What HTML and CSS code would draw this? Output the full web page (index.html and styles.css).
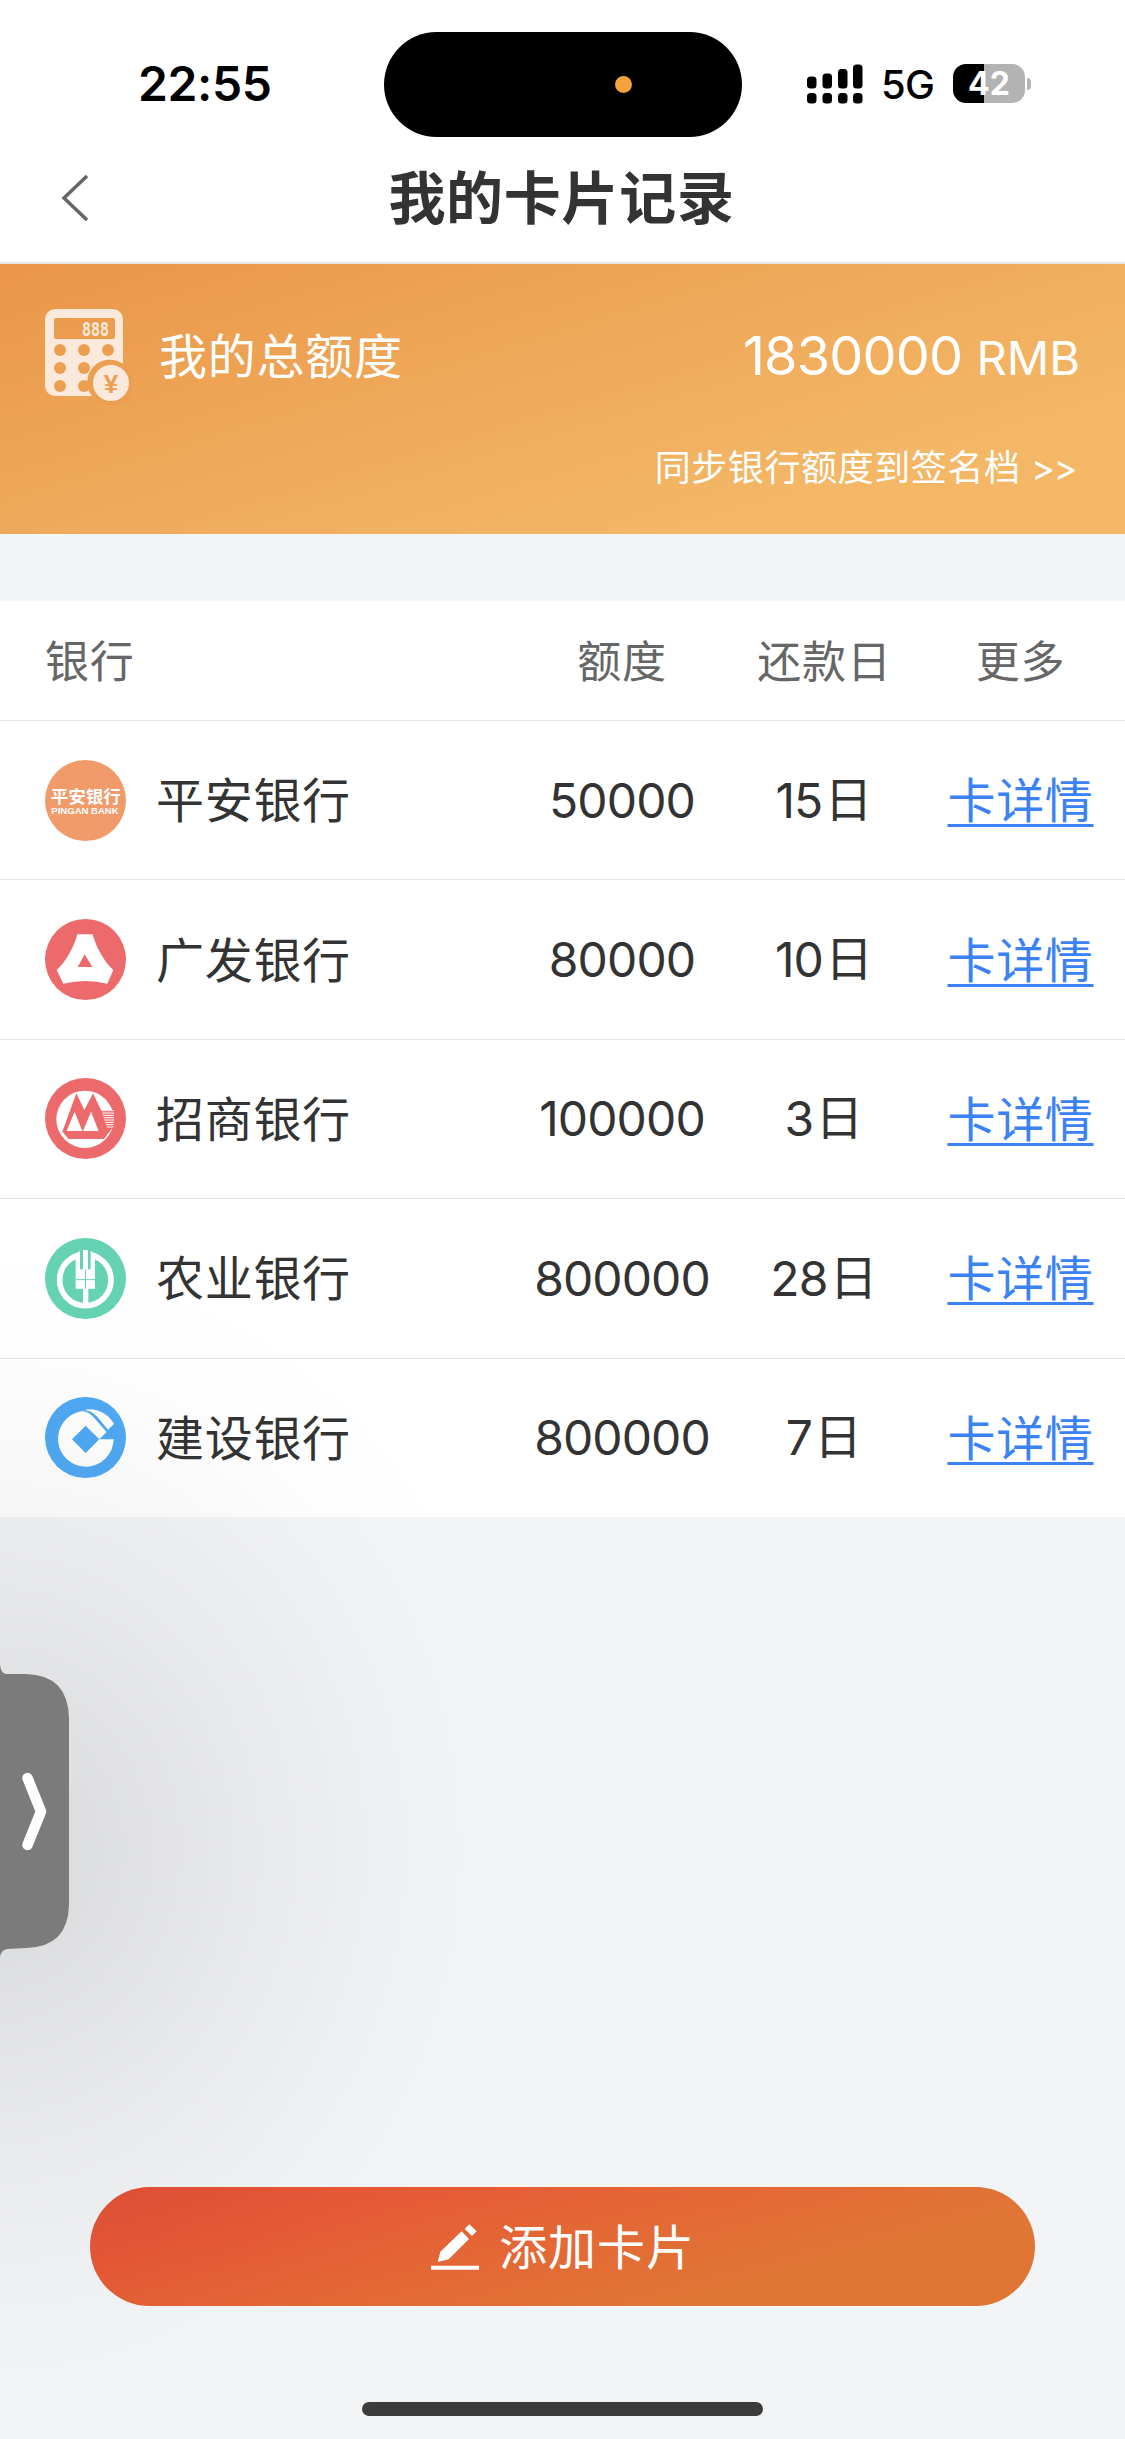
FILE: index.html
```html
<!DOCTYPE html>
<html lang="zh-CN">
<head>
<meta charset="utf-8">
<title>我的卡片记录</title>
<link rel="stylesheet" href="styles.css">
</head>
<body>
<div class="screen">
  <header class="top">
    <div class="status">
      <span class="time">22:55</span>
      <div class="island"><i class="dot"></i></div>
      <div class="signals">
        <svg class="bars" width="56" height="40" viewBox="0 0 56 40">
          <rect x="0" y="12.500" width="9.500" height="12" rx="3.500"/><rect x="15.500" y="9.500" width="9.500" height="15" rx="3.500"/><rect x="31" y="5" width="9.500" height="19.500" rx="3.500"/><rect x="46" y="0.500" width="9.500" height="24" rx="3.500"/>
          <rect x="0" y="29" width="9.500" height="10.500" rx="3.500"/><rect x="15.500" y="29" width="9.500" height="10.500" rx="3.500"/><rect x="31" y="29" width="9.500" height="10.500" rx="3.500"/><rect x="46" y="29" width="9.500" height="10.500" rx="3.500"/>
        </svg>
        <span class="net">5G</span>
        <span class="battery">42</span><i class="cap"></i>
      </div>
    </div>
    <div class="nav">
      <svg class="back" width="30" height="50" viewBox="0 0 30 50"><path d="M27 3L4 25 27 47"/></svg>
      <h1>我的卡片记录</h1>
    </div>
  </header>

  <section class="total">
    <div class="total-row">
      <svg class="calc" width="86" height="92" viewBox="0 0 86 92">
        <path fill-rule="evenodd" d="M13 -2H67Q79 -2 79 10V53A22.500 22.500 0 0 0 48 85H13Q1 85 1 73V10Q1 -2 13 -2ZM12 7Q10 7 10 9V26Q10 28 12 28H69Q71 28 71 26V9Q71 7 69 7Z"/>
        <g class="keys"><circle cx="16" cy="39" r="6"/><circle cx="40" cy="39" r="6"/><circle cx="64" cy="39" r="6"/><circle cx="16" cy="57" r="6"/><circle cx="40" cy="57" r="6"/><circle cx="16" cy="75" r="6"/><circle cx="40" cy="75" r="6"/></g>
        <circle class="ring" cx="67" cy="72" r="20"/><circle cx="67" cy="72" r="18"/>
        <text class="lcd" x="38" y="24.500" textLength="27" lengthAdjust="spacingAndGlyphs">888</text>
        <text class="yen" x="67" y="81.500" text-anchor="middle">¥</text>
      </svg>
      <span class="total-label">我的总额度</span>
      <span class="total-sum"><b>1830000</b> RMB</span>
    </div>
    <div class="sync">同步银行额度到签名档 <span class="more">&gt;&gt;</span></div>
  </section>

  <main class="table">
    <div class="row head"><span class="bank">银行</span><span>额度</span><span class="due">还款日</span><span>更多</span></div>
    <div class="row">
      <span class="bank"><svg class="logo" viewBox="0 0 243 243"><circle cx="121.500" cy="121.500" r="121.500" fill="#f19b6b"/><text class="pa" x="17" y="130" textLength="210" lengthAdjust="spacingAndGlyphs">平安银行</text><text class="pa-en" x="19" y="163" textLength="202" lengthAdjust="spacingAndGlyphs">PINGAN BANK</text></svg><span class="name">平安银行</span></span>
      <span class="num">50000</span><span class="num date">15<i class="day">日</i></span><a>卡详情</a>
    </div>
    <div class="row">
      <span class="bank"><svg class="logo" viewBox="0 0 243 243"><circle cx="121.500" cy="121.500" r="121.500" fill="#ec6a6c"/><path fill="#fff" fill-rule="evenodd" d="M97 46H143C152 82 176 127 205 153L187 194Q121 178 55 194L35 153C64 127 88 82 97 46ZM119 106L98 144H142Z"/></svg><span class="name">广发银行</span></span>
      <span class="num">80000</span><span class="num date">10<i class="day">日</i></span><a>卡详情</a>
    </div>
    <div class="row">
      <span class="bank"><svg class="logo" viewBox="0 0 243 243"><circle cx="121.500" cy="121.500" r="121.500" fill="#ec6a6c"/><circle cx="120" cy="124" r="86" fill="#fff"/><path fill="#ec6a6c" d="M94 46L118 96 144 46 168 96H207L206 152H200L177 183H71L52 161Z"/><path fill="#fff" d="M65 159L89 101 112 159ZM114 159L138 101 161 159Z"/><path stroke="#fff" stroke-width="3" d="M169 98H206M172 105H207M174 112H207M176 119H207M178 126H207M180 133H207M183 140H206M186 147H205"/></svg><span class="name">招商银行</span></span>
      <span class="num">100000</span><span class="num date">3<i class="day">日</i></span><a>卡详情</a>
    </div>
    <div class="row">
      <span class="bank"><svg class="logo" viewBox="0 0 243 243"><circle cx="121.500" cy="121.500" r="121.500" fill="#65d3b3"/><circle cx="121" cy="126" r="77" fill="none" stroke="#fff" stroke-width="17"/><path fill="#65d3b3" d="M105 34H139V94H105Z"/><path fill="#fff" d="M92 48L105 38V94H137V38L150 48V152H130V198H114V152H92ZM114 36H129V94H114Z"/><path stroke="#65d3b3" stroke-width="3" d="M92 125H150M121.500 94V152"/></svg><span class="name">农业银行</span></span>
      <span class="num">800000</span><span class="num date">28<i class="day">日</i></span><a>卡详情</a>
    </div>
    <div class="row">
      <span class="bank"><svg class="logo" viewBox="0 0 243 243"><circle cx="121.500" cy="121.500" r="121.500" fill="#4fa9f4"/><path fill="#fff" fill-rule="evenodd" d="M206 127A83.500 83.500 0 1 1 110 43C125 43 136 50 145 60L185 105 163 127ZM122 86L81 127 122 168 163 127Z"/><path fill="#fff" d="M118 39C150 31 190 48 207 81L189 98 158 61Q142 42 118 39Z"/></svg><span class="name">建设银行</span></span>
      <span class="num">800000</span><span class="num date">7<i class="day">日</i></span><a>卡详情</a>
    </div>
  </main>

  <footer class="bottom">
    <button class="add">
      <svg width="48" height="46" viewBox="150 193 144 138"><path d="M150 318H294V330H150ZM170 307L178 276 242 215 264 238 203 299ZM251 208L265 194 287 215 273 229Z"/></svg>
      <span>添加卡片</span>
    </button>
    <div class="home"></div>
  </footer>

  <div class="shade"></div>
  <svg class="drawer" width="70" height="300" viewBox="0 0 70 300"><path class="tab" d="M0 7Q1 16 7 16H26Q68 17 69 60V247Q68 289 26 290L7 291Q1 292 0 299Z"/><path class="arrow" d="M27.500 120L41 153.500 27.500 187"/></svg>
</div>
</body>
</html>
```
FILE: styles.css
```css
* { box-sizing: border-box; }
body {
  margin: 0;
  font-family: Inter, "Noto Sans CJK SC", sans-serif;
  color: #333;
}
i { font-style: normal; }
.screen {
  position: relative;
  display: flex;
  flex-direction: column;
  width: 1125px;
  height: 2439px;
  overflow: hidden;
  background: #f3f4f6;
}
.top {
  height: 264px;
  background: #fff;
  border-bottom: 2px solid #e6e6ea;
}
.status {
  display: grid;
  grid-template-columns: 384px 358px 1fr;
  height: 137px;
  padding-top: 32px;
  color: #000;
}
.time {
  padding-left: 138px;
  font-size: 48px;
  font-weight: 600;
  letter-spacing: -0.400px;
  line-height: 103px;
}
.island {
  display: flex;
  align-items: center;
  height: 105px;
  padding-left: 231px;
  border-radius: 53px;
  background: #000;
}
.dot {
  width: 17px;
  height: 17px;
  border-radius: 50%;
  background: #f2a33c;
}
.signals {
  display: flex;
  align-items: center;
  height: 103px;
  padding-left: 65px;
}
.net {
  width: 72px;
  margin-left: 18px;
  padding-top: 3px;
  font-size: 40px;
  font-weight: 450;
  letter-spacing: -0.800px;
  line-height: 48px;
}
.battery {
  width: 72px;
  height: 39px;
  border-radius: 13px;
  background: linear-gradient(90deg, #000 31px, #b3b3b3 31px);
  color: #fff;
  font-size: 32px;
  font-weight: 700;
  line-height: 39px;
  text-align: center;
}
.cap {
  width: 4px;
  height: 12px;
  margin-left: 2px;
  border-radius: 0 6px 6px 0;
  background: #b3b3b3;
}
.nav {
  display: grid;
  grid-template-columns: 87px 1fr 89px;
  align-items: center;
  height: 122px;
}
.back {
  margin-left: 60px;
  fill: none;
  stroke: #666;
  stroke-width: 3.500;
}
h1 {
  margin: 0;
  padding-top: 2px;
  font-size: 57px;
  font-weight: 700;
  letter-spacing: 0.700px;
  line-height: 80px;
  text-align: center;
}
.total {
  height: 270px;
  padding: 45px 45px 0 44px;
  background: linear-gradient(163deg, #ea9649, #f3b766 77%);
  color: #fff;
}
.total-row { display: flex; height: 92px; }
.calc { overflow: visible; margin-top: 2px; fill: #fbeadb; }
.keys { fill: #ec9e51; }
.ring { fill: none; stroke: #ec9e51; stroke-width: 5; }
.lcd { font: 700 20px "DejaVu Sans Mono", monospace; }
.yen { font: 700 26px "Liberation Sans", sans-serif; fill: #ec9e51; }
.total-label {
  margin-left: 29px;
  font-size: 48px;
  letter-spacing: 0.750px;
  line-height: 96px;
}
.total-sum {
  margin-left: auto;
  font-size: 47px;
  line-height: 94px;
}
.total-sum b {
  margin-right: 1px;
  font-size: 54px;
  font-weight: 400;
  letter-spacing: -0.800px;
}
.sync {
  margin-top: 39px;
  padding-right: 4px;
  font-size: 36px;
  letter-spacing: 0.600px;
  line-height: 56px;
  text-align: right;
}
.more { letter-spacing: -1.500px; }
.table { margin-top: 67px; background: #fff; }
.row {
  display: grid;
  grid-template-columns: 520px 204px 198px 197px;
  align-items: center;
  height: 159.400px;
  border-top: 1.500px solid #e4e4e6;
  font-size: 48px;
  letter-spacing: 0.700px;
  text-align: center;
}
.row.head {
  height: 119px;
  padding-bottom: 4px;
  border: 0;
  color: #666;
  font-size: 44px;
  letter-spacing: 0.800px;
}
.due { padding-left: 3px; }
.bank {
  display: flex;
  align-items: center;
  padding-left: 45px;
}
.name { padding-bottom: 6px; }
.logo { width: 81px; height: 81px; margin-right: 30px; }
.pa { font: 700 50px "Noto Sans CJK SC", sans-serif; fill: #fff; letter-spacing: 0; }
.pa-en { font: 700 28px "Liberation Sans", sans-serif; fill: #fff; letter-spacing: 0; }
.num {
  padding-top: 1px;
  letter-spacing: -0.900px;
  line-height: 72px;
}
.date { padding-left: 1px; }
.day { margin-left: 2px; vertical-align: 1px; line-height: 1; }
a {
  padding-bottom: 6px;
  color: #3b82f7;
  text-decoration: underline;
  text-decoration-thickness: 3px;
  text-underline-offset: 6px;
}
.bottom {
  display: flex;
  flex-direction: column;
  align-items: center;
  margin-top: auto;
  padding-bottom: 23px;
}
.add {
  display: flex;
  align-items: center;
  justify-content: center;
  gap: 20px;
  width: 945px;
  height: 119px;
  padding: 0 0 0 7px;
  border: 0;
  border-radius: 60px;
  background: linear-gradient(165deg, #e55036, #e75a36 25%, #e36935 50%, #e07536 72%);
  color: #fff;
  font: 48px Inter, "Noto Sans CJK SC", sans-serif;
  letter-spacing: 0.900px;
}
.add span { padding: 0 6px 6px 0; }
.add svg { fill: #fff; }
.home {
  width: 401px;
  height: 14px;
  margin-top: 96px;
  border-radius: 7px;
  background: #3c3c3c;
}
.shade {
  position: absolute;
  left: 0;
  top: 1200px;
  width: 560px;
  height: 1239px;
  background: radial-gradient(ellipse 550px 620px at 0 650px, rgba(0,0,0,.12), rgba(0,0,0,.09) 15%, rgba(0,0,0,.038) 50%, rgba(0,0,0,.009) 80%, rgba(0,0,0,0));
}
.drawer { position: absolute; left: 0; top: 1658px; }
.tab { fill: #7b7b7b; }
.arrow {
  fill: none;
  stroke: #fff;
  stroke-width: 10.500;
  stroke-linecap: round;
  stroke-linejoin: round;
}
```
